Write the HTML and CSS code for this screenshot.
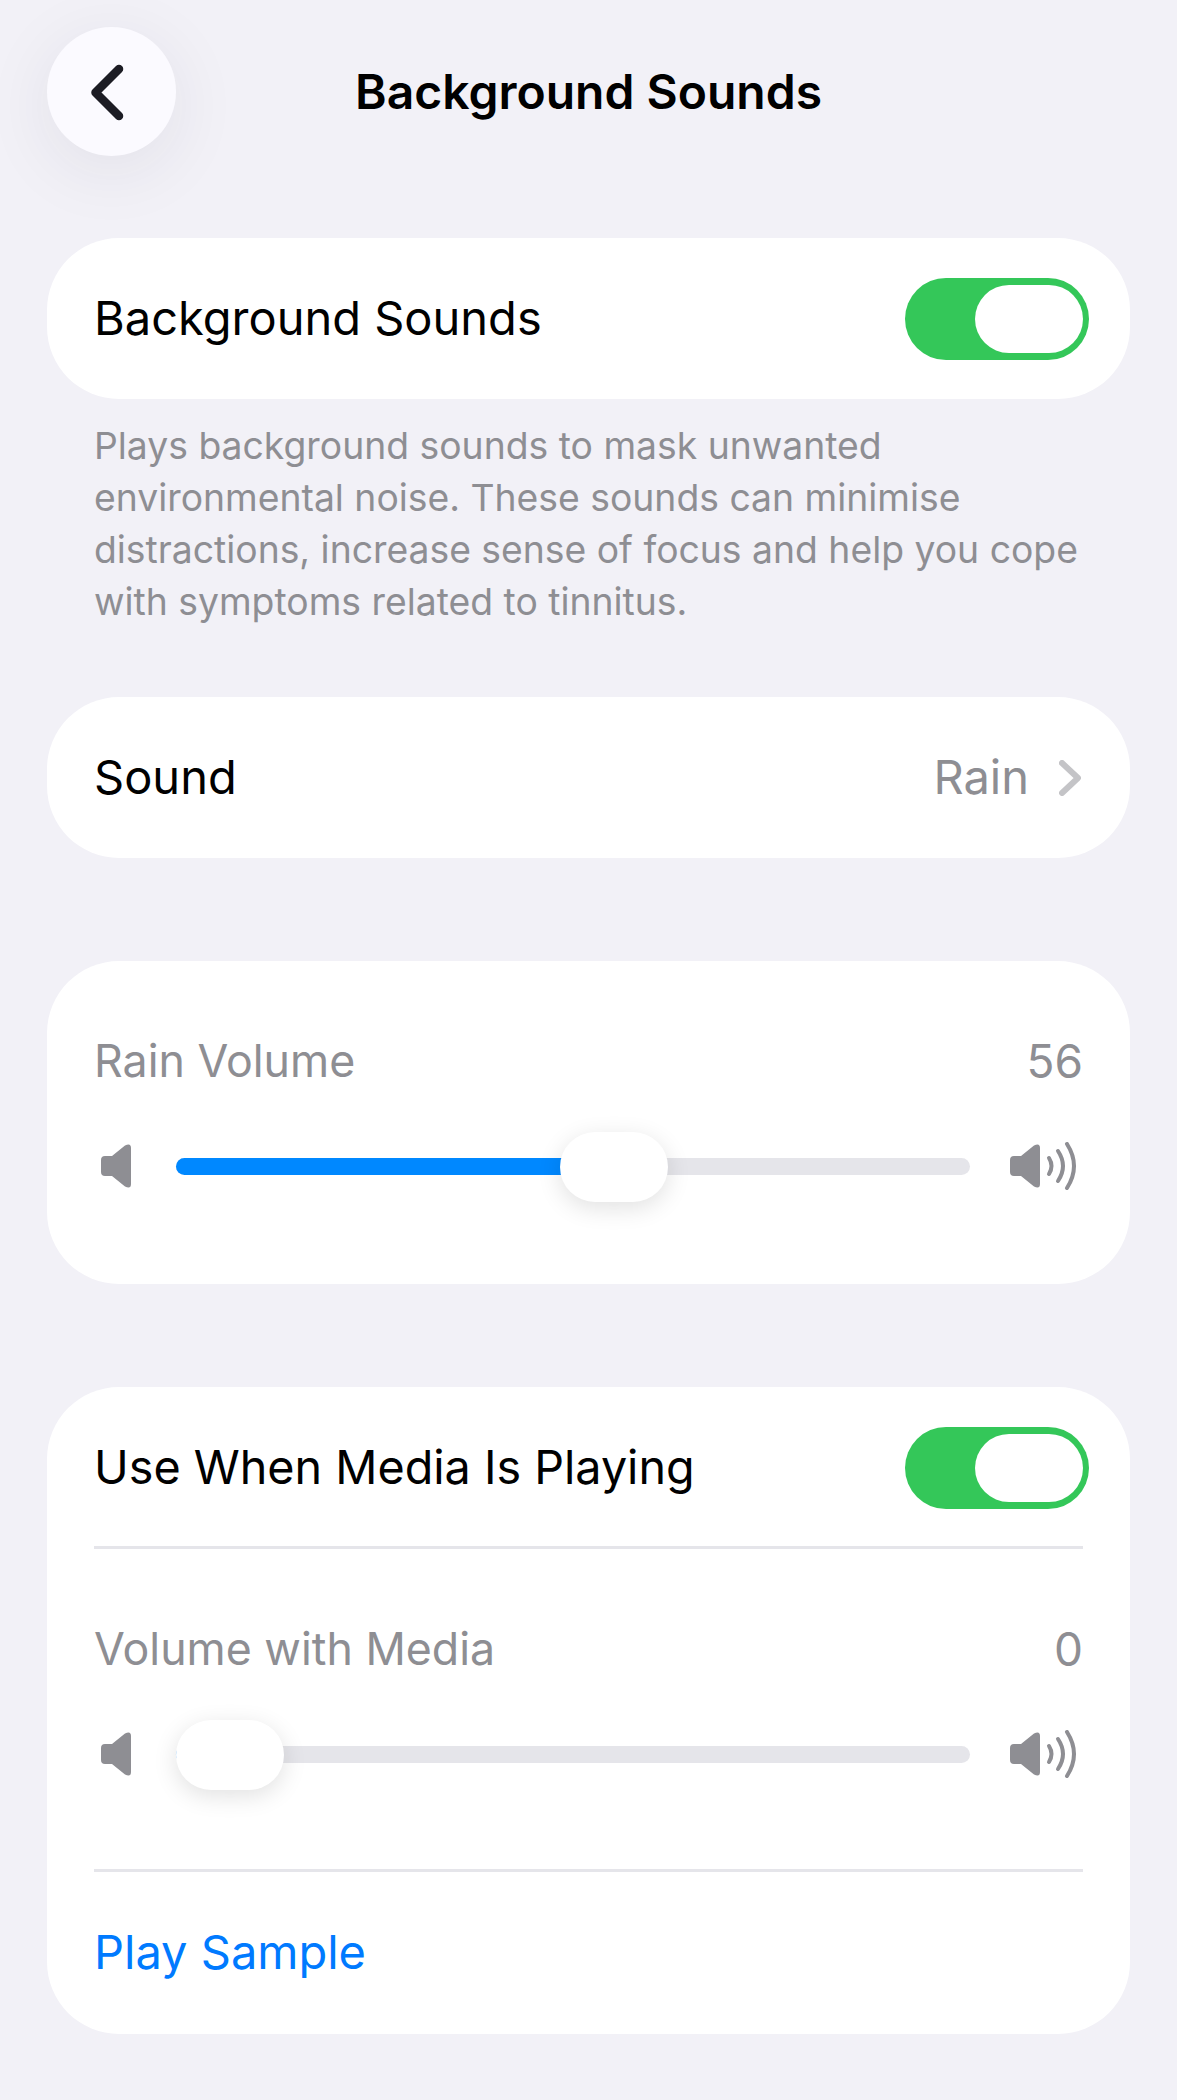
FILE: index.html
```html
<!DOCTYPE html>
<html lang="en">
<head>
<meta charset="utf-8">
<title>Background Sounds</title>
<link rel="stylesheet" href="styles.css">
</head>
<body>
<svg class="sprite" aria-hidden="true">
  <symbol id="speaker-low" viewBox="0 0 30 44">
    <path d="M4 12H11L24 1.5Q30-1.500 30 4V40Q30 45.500 24 42.500L11 32H4Q0 32 0 28V16Q0 12 4 12Z"/>
  </symbol>
  <symbol id="speaker-high" viewBox="0 0 67 48">
    <path d="M4 14H11L24 3.500Q30 .5 30 6V42Q30 47.500 24 44.500L11 34H4Q0 34 0 30V18Q0 14 4 14Z"/>
    <path class="wave" d="M39 16Q44 24 39 32"/>
    <path class="wave" d="M48 9Q58 24 48 39"/>
    <path class="wave" d="M57 2Q71 24 57 46"/>
  </symbol>
</svg>
<main class="page">
  <header class="header">
    <button class="back" aria-label="Back">
      <svg viewBox="0 0 40 62" width="40" height="62"><path d="M30 8 6.500 31.500 30 55"/></svg>
    </button>
    <h1 class="title">Background Sounds</h1>
  </header>

  <section class="card row">
    <span class="label">Background Sounds</span>
    <span class="toggle"><span class="knob"></span></span>
  </section>
  <p class="note">Plays background sounds to mask unwanted environmental noise. These sounds can minimise distractions, increase sense of focus and help you cope with symptoms related to tinnitus.</p>

  <section class="card row sound">
    <span class="label">Sound</span>
    <span class="value-link">
      <span class="value">Rain</span>
      <svg class="chevron" viewBox="0 0 22 36" width="22" height="36"><path d="M3 3 19 18 3 33"/></svg>
    </span>
  </section>

  <section class="card volume">
    <div class="slider-head">
      <span class="muted">Rain Volume</span>
      <span class="muted number">56</span>
    </div>
    <div class="slider-row">
      <span class="icon-low"><svg width="30" height="44"><use href="#speaker-low"/></svg></span>
      <div class="track" style="--value:56">
        <span class="fill"></span>
        <span class="thumb"></span>
      </div>
      <span class="icon-high"><svg width="67" height="48"><use href="#speaker-high"/></svg></span>
    </div>
  </section>

  <section class="card media">
    <div class="media-toggle">
      <span class="label">Use When Media Is Playing</span>
      <span class="toggle"><span class="knob"></span></span>
    </div>
    <div class="volume-inner">
      <div class="slider-head">
        <span class="muted">Volume with Media</span>
        <span class="muted number">0</span>
      </div>
      <div class="slider-row">
        <span class="icon-low"><svg width="30" height="44"><use href="#speaker-low"/></svg></span>
        <div class="track" style="--value:0">
          <span class="fill"></span>
          <span class="thumb"></span>
        </div>
        <span class="icon-high"><svg width="67" height="48"><use href="#speaker-high"/></svg></span>
      </div>
    </div>
    <div class="sample">Play Sample</div>
  </section>
</main>
</body>
</html>
```

FILE: styles.css
```css
* {
  box-sizing: border-box;
}

html,
body {
  margin: 0;
  background: #f2f1f7;
}

body {
  height: 2100px;
  overflow: hidden;
  font-family: Inter, "Liberation Sans", sans-serif;
  font-size: 47px;
  color: #000;
}

.sprite {
  display: none;
}

.page {
  display: flex;
  flex-direction: column;
  padding: 27px 47px 0;
}

/* Navigation bar */
.header {
  display: grid;
  grid-template-columns: 129px 1fr 129px;
  align-items: center;
  height: 129px;
  margin-bottom: 82px;
}

.back {
  display: flex;
  align-items: center;
  justify-content: center;
  width: 129px;
  height: 129px;
  padding: 0 6px 0 0;
  border: 0;
  border-radius: 50%;
  background: #fbfaff;
  box-shadow: 0 14px 70px rgba(40, 40, 60, 0.08);
}

.back path {
  fill: none;
  stroke: #1c1c24;
  stroke-width: 8.5;
  stroke-linecap: round;
  stroke-linejoin: round;
}

.title {
  margin: 0;
  font-size: 48px;
  font-weight: 600;
  text-align: center;
}

/* Grouped cards */
.card {
  background: #fff;
  border-radius: 72px;
}

.row {
  display: flex;
  align-items: center;
  justify-content: space-between;
  height: 161px;
  padding: 0 41px 0 47px;
}

.label {
  line-height: 56px;
}

.row .label,
.row .value {
  margin-top: -2px;
}

.muted {
  color: #8e8e93;
  font-size: 44.700px;
  line-height: 56px;
}

.number {
  font-size: 46px;
}

.value {
  color: #8e8e93;
  line-height: 56px;
}

.toggle {
  display: flex;
  justify-content: flex-end;
  width: 184px;
  height: 82px;
  padding: 7px 6px;
  border-radius: 41px;
  background: #34c759;
}

.knob {
  width: 108px;
  height: 68px;
  border-radius: 34px;
  background: #fff;
}

.note {
  margin: 21px 47px 69px;
  color: #8e8e93;
  font-size: 37.300px;
  line-height: 52px;
}

.sound {
  padding-right: 47px;
}

.value-link {
  display: flex;
  align-items: center;
  gap: 30px;
}

.chevron {
  margin-right: 2px;
}

.chevron path {
  fill: none;
  stroke: #c4c4c7;
  stroke-width: 6;
  stroke-linecap: round;
  stroke-linejoin: round;
}

/* Volume sliders */
.volume {
  height: 323px;
  margin-top: 103px;
  padding: 72px 47px 0;
}

.slider-head {
  display: flex;
  justify-content: space-between;
  margin-bottom: 42px;
}

.slider-row {
  display: flex;
  align-items: center;
  height: 70px;
}

.icon-low,
.icon-high {
  display: flex;
  fill: #8e8e93;
}

.icon-low {
  width: 82px;
  padding-left: 7px;
}

.icon-high {
  width: 113px;
  padding-left: 40px;
}

.wave {
  fill: none;
  stroke: #8e8e93;
  stroke-width: 4;
  stroke-linecap: round;
}

.track {
  position: relative;
  flex: 1;
  height: 17px;
  border-radius: 9px;
  background: #e5e5ea;
}

.fill {
  position: absolute;
  top: 0;
  bottom: 0;
  left: 0;
  width: calc((100% - 108px) * var(--value) / 100 + 54px);
  border-radius: 9px;
  background: #0088ff;
}

.thumb {
  position: absolute;
  top: -26px;
  left: calc((100% - 108px) * var(--value) / 100);
  width: 108px;
  height: 70px;
  border-radius: 35px;
  background: #fff;
  box-shadow: 0 6px 24px rgba(0, 0, 0, 0.12);
}

.media {
  height: 647px;
  margin-top: 103px;
  padding: 0 47px;
}

.media-toggle {
  display: flex;
  align-items: center;
  justify-content: space-between;
  height: 162px;
  border-bottom: 3px solid #e5e5ea;
}

.media-toggle .label {
  font-size: 46.700px;
}

.media-toggle .toggle {
  margin: 2px -6px 0 0;
}

.volume-inner {
  height: 323px;
  padding-top: 72px;
  border-bottom: 3px solid #e5e5ea;
}

.sample {
  color: #007aff;
  line-height: 56px;
  padding-top: 52px;
}
```
